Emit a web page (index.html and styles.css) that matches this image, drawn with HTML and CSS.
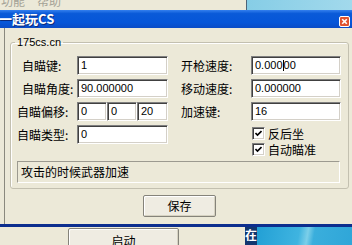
FILE: index.html
```html
<!DOCTYPE html>
<html lang="zh-CN">
<head>
  <meta charset="UTF-8">
  <title>一起玩CS</title>
  <link rel="stylesheet" href="styles.css">
</head>
<body>

<div class="top">
  <div class="menubar"><span>功能</span><span>帮助</span></div>
  <div class="desk"></div>
</div>

<div class="window">
  <div class="titlebar">
    <span class="title">一起玩CS</span>
    <span class="close">
      <svg width="11" height="11" viewBox="0 0 11 11">
        <rect x="0.5" y="0.5" width="10" height="10" rx="1.5" fill="#e0532f" stroke="#fff"/>
        <path d="M3.2 3.2 L7.8 7.8 M7.8 3.2 L3.2 7.8" stroke="#fff" stroke-width="1.6"/>
      </svg>
    </span>
  </div>

  <div class="pane">
    <fieldset class="group">
      <legend>175cs.cn</legend>
      <div class="grid">
        <span class="lbl in">自瞄键:</span>
        <div class="field">1</div>
        <span class="lbl right">开枪速度:</span>
        <div class="field">0.000<span class="caret"></span>00</div>

        <span class="lbl in">自瞄角度:</span>
        <div class="field">90.000000</div>
        <span class="lbl right">移动速度:</span>
        <div class="field">0.000000</div>

        <span class="lbl">自瞄偏移:</span>
        <div class="triple">
          <div class="field">0</div>
          <div class="field">0</div>
          <div class="field">20</div>
        </div>
        <span class="lbl right">加速键:</span>
        <div class="field">16</div>

        <span class="lbl">自瞄类型:</span>
        <div class="field">0</div>
        <span></span>
        <div class="checks">
          <div class="check"><span class="box"><svg width="7" height="7" viewBox="0 0 7 7"><path d="M0.5 3 L2.5 5 L6.5 1" fill="none" stroke="#000" stroke-width="1.6"/></svg></span>反后坐</div>
          <div class="check"><span class="box"><svg width="7" height="7" viewBox="0 0 7 7"><path d="M0.5 3 L2.5 5 L6.5 1" fill="none" stroke="#000" stroke-width="1.6"/></svg></span>自动瞄准</div>
        </div>
      </div>
      <div class="status">攻击的时候武器加速</div>
    </fieldset>

    <div class="actions">
      <button class="btn save">保存</button>
    </div>
  </div>
</div>

<div class="bottom">
  <div class="under"><button class="btn start">启动</button></div>
  <div class="taskbar"><span class="tb-icon">在</span></div>
</div>

</body>
</html>
```

FILE: styles.css
```css
body {
  margin: 0;
  width: 352px;
  height: 245px;
  overflow: hidden;
  background: #ece9d8;
  font-family: "Noto Sans CJK SC", sans-serif;
  font-size: 12px;
  color: #000;
}
.top {
  display: flex;
  height: 10px;
  overflow: hidden;
}
.menubar {
  width: 245px;
  background: #ece9d8;
  border-right: 1px solid #4d6378;
  display: flex;
  gap: 12px;
  padding-left: 1px;
  color: #a4a296;
  line-height: 12px;
}
.menubar span {
  margin-top: -5px;
}
.desk {
  flex: 1;
  background: linear-gradient(to right, #86cde6, #a2d9ec);
}
.titlebar {
  height: 18px;
  background: linear-gradient(#3480ee, #0a5ad8 20%, #0656d8 70%, #0a4cc6);
  display: flex;
  justify-content: space-between;
  padding-right: 2px;
}
.title {
  color: #fff;
  font-weight: bold;
  font-size: 13px;
  line-height: 18px;
  margin-left: -1px;
  text-shadow: 1px 1px 0 #0b2a7a;
}
.close {
  align-self: flex-end;
  height: 11px;
  margin-bottom: 1px;
}
.close svg {
  display: block;
}
.pane {
  margin-left: 4px;
  border-left: 1px solid #8a897e;
  padding: 8px 3px 7px 5px;
}
.group {
  margin: 0;
  padding: 0 0 5px 0;
  border: 1px solid #c3c0b0;
  border-radius: 3px;
  box-shadow: inset 1px 1px 0 #fff;
}
.group legend {
  margin-left: 4px;
  padding: 0 2px;
  font-family: "Liberation Sans", sans-serif;
  font-size: 11px;
  line-height: 12px;
}
.grid {
  display: grid;
  grid-template-columns: 60px 91px 83px 90px;
  row-gap: 4px;
  align-items: start;
  margin-top: 8px;
  padding-left: 6px;
}
.lbl {
  line-height: 19px;
  white-space: nowrap;
}
.lbl.in {
  padding-left: 5px;
}
.lbl.right {
  padding-left: 13px;
}
.field {
  box-sizing: border-box;
  height: 19px;
  background: #fff;
  border: 1px solid;
  border-color: #7f7f7f #fff #fff #7f7f7f;
  box-shadow: inset 1px 1px 0 #404040, inset -1px -1px 0 #d4d0c8;
  padding-left: 3px;
  font-family: "Liberation Sans", sans-serif;
  font-size: 11px;
  line-height: 17px;
  white-space: nowrap;
  overflow: hidden;
}
.caret {
  display: inline-block;
  width: 1px;
  height: 11px;
  background: #000;
  vertical-align: -2px;
}
.triple {
  display: flex;
}
.triple .field {
  width: 30px;
}
.triple .field:last-child {
  width: 31px;
}
.checks {
  display: flex;
  flex-direction: column;
  padding-left: 1px;
}
.check {
  display: flex;
  align-items: center;
  gap: 3px;
  height: 16px;
  white-space: nowrap;
}
.box {
  box-sizing: border-box;
  width: 13px;
  height: 13px;
  background: #fff;
  border: 1px solid;
  border-color: #7f7f7f #fff #fff #7f7f7f;
  box-shadow: inset 1px 1px 0 #404040, inset -1px -1px 0 #d4d0c8;
  display: flex;
  align-items: center;
  justify-content: center;
}
.box svg {
  display: block;
}
.status {
  box-sizing: border-box;
  height: 22px;
  margin: 4px 8px 0 6px;
  border: 1px solid;
  border-color: #9c9a90 #fff #fff #9c9a90;
  padding-left: 3px;
  line-height: 20px;
}
.actions {
  display: flex;
  justify-content: center;
  margin-top: 6px;
}
.btn {
  box-sizing: border-box;
  font-family: "Noto Sans CJK SC", sans-serif;
  font-size: 12px;
  color: #000;
  background: #efece2;
  border: 1px solid #85837a;
  border-radius: 2px;
  box-shadow: inset 1px 1px 0 #fff, inset -1px -1px 0 #d6d2c2;
  padding: 0;
}
.save {
  width: 73px;
  height: 22px;
  line-height: 20px;
}
.bottom {
  display: flex;
  height: 18px;
  border-top: 3px solid #0c2e8e;
  overflow: hidden;
}
.under {
  width: 245px;
  background: #ece9d8;
  padding: 1px 0 0 68px;
  box-sizing: border-box;
}
.start {
  width: 111px;
  height: 24px;
  line-height: 14px;
  padding-top: 2px;
  display: block;
}
.taskbar {
  flex: 1;
  background: linear-gradient(100deg, #1a9ad2, #3fb4e0 50%, #7ccfe9 58%, #3aaedc 64%, #2fa6d8);
}
.tb-icon {
  display: block;
  width: 12px;
  height: 18px;
  background: #12366f;
  color: #fff;
  font-weight: bold;
  font-size: 12px;
  line-height: 16px;
  text-align: center;
}
```
